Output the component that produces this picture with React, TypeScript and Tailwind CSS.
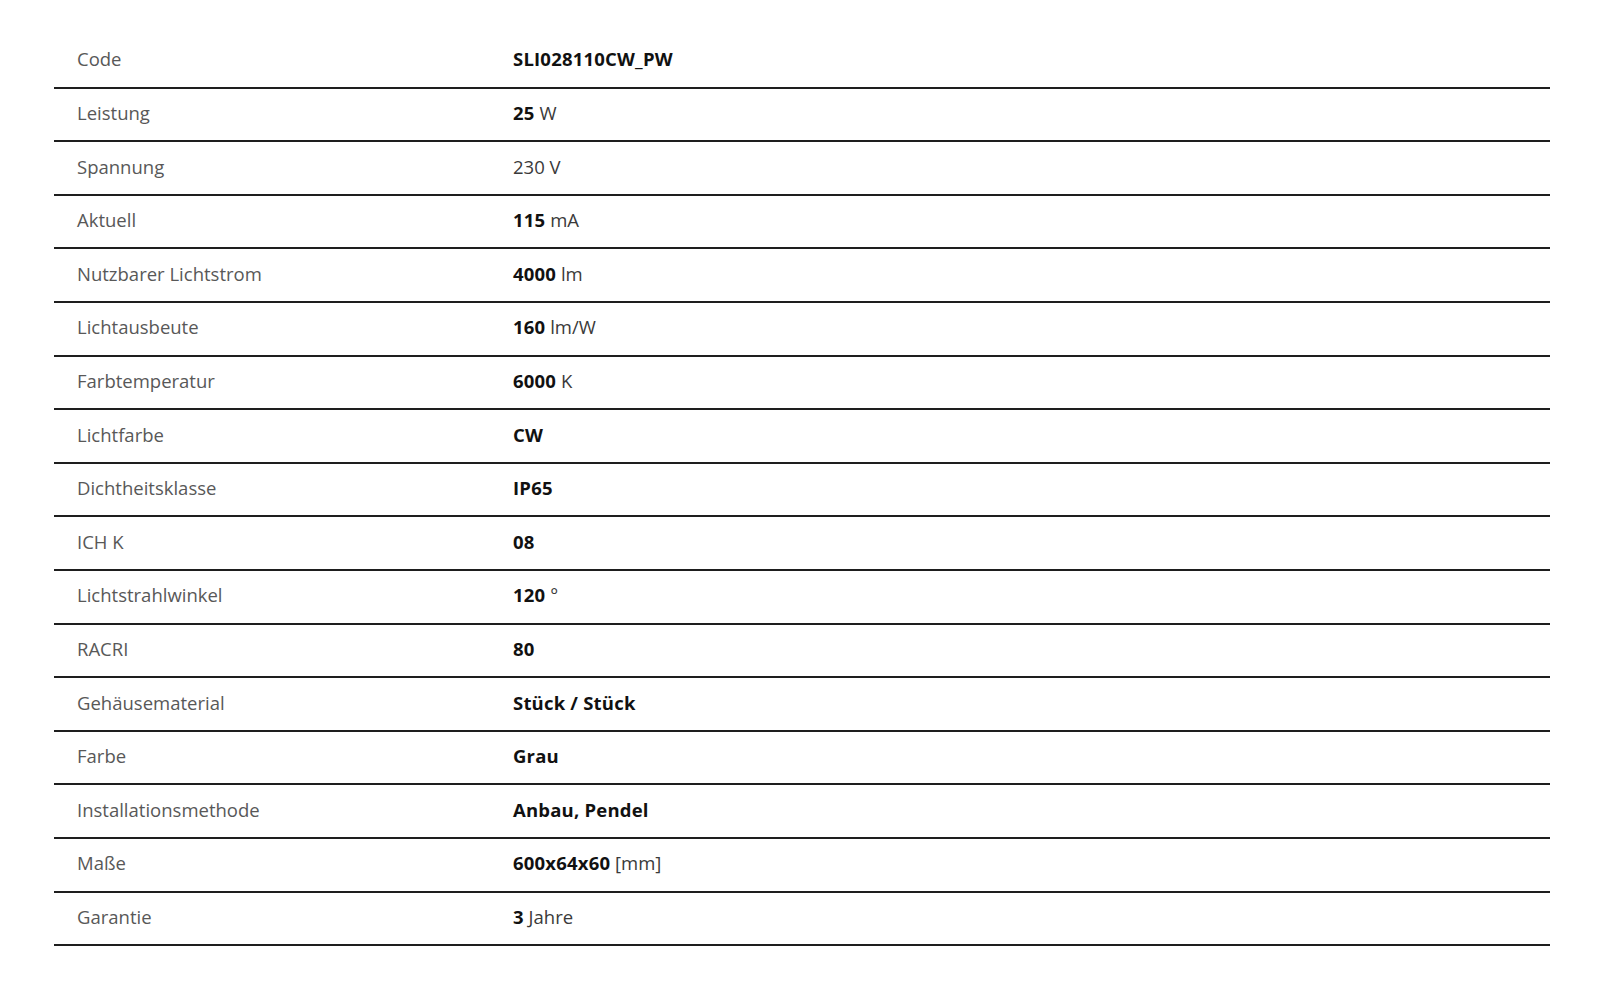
const rows: { label: string; strong: string; unit?: string }[] = [
  { label: "Code", strong: "SLI028110CW_PW" },
  { label: "Leistung", strong: "25", unit: "W" },
  { label: "Spannung", strong: "", unit: "230 V" },
  { label: "Aktuell", strong: "115", unit: "mA" },
  { label: "Nutzbarer Lichtstrom", strong: "4000", unit: "lm" },
  { label: "Lichtausbeute", strong: "160", unit: "lm/W" },
  { label: "Farbtemperatur", strong: "6000", unit: "K" },
  { label: "Lichtfarbe", strong: "CW" },
  { label: "Dichtheitsklasse", strong: "IP65" },
  { label: "ICH K", strong: "08" },
  { label: "Lichtstrahlwinkel", strong: "120", unit: "°" },
  { label: "RACRI", strong: "80" },
  { label: "Gehäusematerial", strong: "Stück / Stück" },
  { label: "Farbe", strong: "Grau" },
  { label: "Installationsmethode", strong: "Anbau, Pendel" },
  { label: "Maße", strong: "600x64x60", unit: "[mm]" },
  { label: "Garantie", strong: "3", unit: "Jahre" },
];

export default function App() {
  return (
    <main
      className="min-h-[1000px] bg-white px-[54px] pt-[35px]"
      style={{ fontFamily: "'Open Sans', 'Noto Sans', sans-serif" }}
    >
      {/* tabelle mit technischen daten */}
      <div className="w-[1496px]">
        {rows.map((r) => (
          <div
            key={r.label}
            className="flex h-[53.6px] items-center border-b-2 border-[#1e1e1e] pb-[3px] text-[18.5px]"
          >
            <div className="w-[459px] pl-[23px] text-[#585858]">{r.label}</div>
            <div className="text-[#3a3a3a]">
              {r.strong && (
                <span className="font-bold tracking-[0.2px] text-[#111111]">{r.strong}</span>
              )}
              {r.strong && r.unit ? " " : ""}
              {r.unit}
            </div>
          </div>
        ))}
      </div>
    </main>
  );
}
